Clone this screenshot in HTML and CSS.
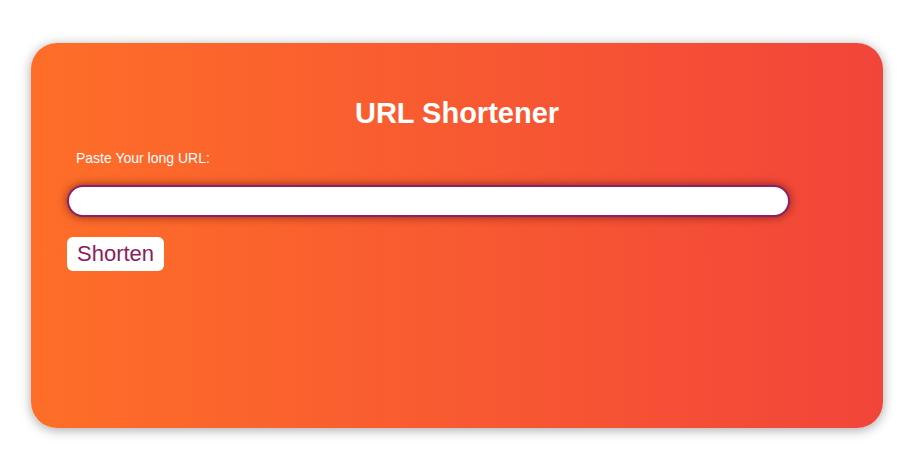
FILE: index.html
```html
<!DOCTYPE html>
<html>
<head>
<meta charset="utf-8">
<link rel="stylesheet" href="styles.css">
</head>
<body>
<div class="page">
  <div class="card">
    <h1 class="title">URL Shortener</h1>
    <label class="label" for="url">Paste Your long URL:</label>
    <input class="url-input" id="url" type="text">
    <button class="btn">Shorten</button>
  </div>
</div>
</body>
</html>
```
FILE: styles.css
```css
html, body { margin: 0; padding: 0; background: #fff; }
body { font-family: "Liberation Sans", Arial, sans-serif; }
.page { padding: 43px 32px 34px 31px; }
.card {
  height: 385px;
  box-sizing: border-box;
  border-radius: 26px;
  background: linear-gradient(to right, #fe6e28, #f2453a);
  box-shadow: 0 2px 12px rgba(0,0,0,0.35);
  padding: 50px 36px 0 36px;
  display: flex;
  flex-direction: column;
  align-items: flex-start;
}
.title {
  align-self: stretch;
  text-align: center;
  color: #fff;
  font-size: 29px;
  font-weight: bold;
  margin: 0 0 17px 0;
  line-height: 40px;
}
.label {
  color: #fff;
  font-size: 14px;
  margin-left: 9px;
  line-height: 16px;
}
.url-input {
  margin-top: 19px;
  width: 723px;
  height: 32px;
  box-sizing: border-box;
  border: 2px solid #8c1f6c;
  border-radius: 16px;
  background: #fff;
  box-shadow: 0 0 10px rgba(60,10,0,0.6);
  outline: none;
}
.btn {
  margin-top: 20px;
  background: #fff;
  border: none;
  border-radius: 6px;
  color: #8d1c5e;
  font-family: "Liberation Sans", Arial, sans-serif;
  font-size: 22px;
  height: 34px;
  padding: 0 10px;
}
```
